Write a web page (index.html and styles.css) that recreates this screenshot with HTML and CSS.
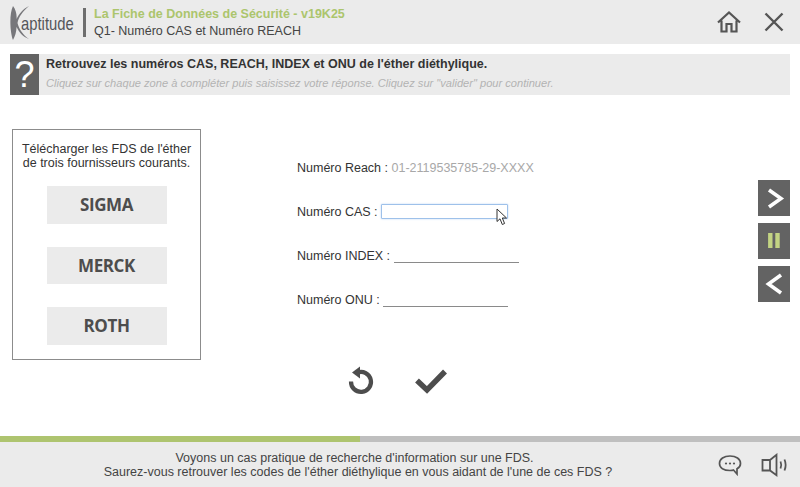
FILE: index.html
```html
<!DOCTYPE html>
<html lang="fr">
<head>
<meta charset="utf-8">
<title>Kaptitude</title>
<link rel="stylesheet" href="styles.css">
</head>
<body>
<div class="app">
  <header class="top">
    <div class="logo">
      <svg class="logo-mark" viewBox="0 0 20 34" width="20" height="34">
        <path d="M3 0 C6 4 7 9 6.500 13 C9 8 13 3 19 0 C13 5 8.500 11 7.500 17 C9 23 13 29 19 33 C13 31 9 26 6.500 21 C6.500 26 5 30 3 34 C0 26 -1 8 3 0Z" fill="#77777b"/>
      </svg>
      <span class="logo-text">aptitude</span>
    </div>
    <div class="titles">
      <div class="title">La Fiche de Données de Sécurité - v19K25</div>
      <div class="subtitle">Q1- Numéro CAS et Numéro REACH</div>
    </div>
    <svg class="top-icon home" viewBox="0 0 24 22" width="24" height="22">
      <path d="M1 11.500 L12 1.500 L23 11.500 M4.500 9.500 V20.500 H9.500 V13 H14.500 V20.500 H19.500 V9.500" fill="none" stroke="#555" stroke-width="2.200"/>
    </svg>
    <svg class="top-icon close" viewBox="0 0 20 20" width="20" height="20">
      <path d="M1.500 1.500 L18.500 18.500 M18.500 1.500 L1.500 18.500" fill="none" stroke="#555" stroke-width="2.400"/>
    </svg>
  </header>

  <section class="question">
    <div class="q-mark">?</div>
    <div class="q-text">
      <div class="q-main">Retrouvez les numéros CAS, REACH, INDEX et ONU de l'éther diéthylique.</div>
      <div class="q-hint">Cliquez sur chaque zone à compléter puis saisissez votre réponse. Cliquez sur "valider" pour continuer.</div>
    </div>
  </section>

  <main class="content">
    <aside class="panel">
      <p class="panel-text">Télécharger les FDS de l'éther<br>de trois fournisseurs courants.</p>
      <div class="supplier">SIGMA</div>
      <div class="supplier">MERCK</div>
      <div class="supplier">ROTH</div>
    </aside>

    <div class="center">
      <div class="fields">
        <div class="field">Numéro Reach : <span class="given">01-2119535785-29-XXXX</span></div>
        <div class="field">Numéro CAS : <span class="input-box"></span></div>
        <div class="field">Numéro INDEX : <span class="blank"></span></div>
        <div class="field">Numéro ONU : <span class="blank"></span></div>
        <svg class="cursor" viewBox="0 0 12 18" width="12" height="18">
          <path d="M1 1 V13.500 L4 10.800 L6.300 16.500 L8.600 15.500 L6.300 10 H10.500 Z" fill="#fff" stroke="#333" stroke-width="1"/>
        </svg>
      </div>
      <div class="actions">
        <svg viewBox="0 0 28 30" width="28" height="30">
          <path d="M10.500 6.500 A10 10 0 1 1 4 15.500" fill="none" stroke="#4d4d4d" stroke-width="4.200"/>
          <path d="M13 0.500 V12.500 L5 6.500 Z" fill="#4d4d4d"/>
        </svg>
        <svg viewBox="0 0 34 26" width="34" height="26">
          <path d="M3 12.500 L13 22 L31 3.500" fill="none" stroke="#4d4d4d" stroke-width="5.500"/>
        </svg>
      </div>
    </div>

    <nav class="side-nav">
      <div class="nav-btn">
        <svg viewBox="0 0 32 36" width="32" height="36"><path d="M11 10 L23 18.500 L11 27" fill="none" stroke="#fff" stroke-width="3.600"/></svg>
      </div>
      <div class="nav-btn">
        <svg viewBox="0 0 32 36" width="32" height="36"><path d="M12.300 10 V25 M19.500 10 V25" fill="none" stroke="#c3d483" stroke-width="4.400"/></svg>
      </div>
      <div class="nav-btn">
        <svg viewBox="0 0 32 36" width="32" height="36"><path d="M23 9 L10.500 18 L23 27" fill="none" stroke="#fff" stroke-width="3.600"/></svg>
      </div>
    </nav>
  </main>

  <div class="progress"><div class="progress-fill"></div></div>

  <footer class="bottom">
    <p class="narration">Voyons un cas pratique de recherche d'information sur une FDS.&nbsp;&nbsp;<br>Saurez-vous retrouver les codes de l'éther diéthylique en vous aidant de l'une de ces FDS ?</p>
    <svg class="bubble" viewBox="0 0 24 22" width="24" height="22">
      <path d="M12 2 C6 2 1.500 5 1.500 9.500 C1.500 14 6 16.500 12 16.500 C13.500 16.500 15 16.300 15.500 16 L19 20 L19 14.800 C21.500 13.500 22.500 11.500 22.500 9.500 C22.500 5 18 2 12 2Z" fill="none" stroke="#555" stroke-width="1.700"/>
      <circle cx="8" cy="9.500" r="1.100" fill="#555"/><circle cx="12" cy="9.500" r="1.100" fill="#555"/><circle cx="16" cy="9.500" r="1.100" fill="#555"/>
    </svg>
    <svg class="speaker" viewBox="0 0 28 24" width="28" height="24">
      <path d="M1.500 7 H9 L15.500 1.800 V22.200 L9 17.500 H1.500 Z M9 7 V17.500" fill="none" stroke="#555" stroke-width="1.800"/>
      <path d="M19.500 8.500 Q21 12 19.500 15.500 M23.500 6.500 Q25.800 12 23.500 17.500" fill="none" stroke="#555" stroke-width="1.800"/>
    </svg>
  </footer>
</div>
</body>
</html>
```
FILE: styles.css
```css
* { box-sizing: border-box; }
html, body { margin: 0; padding: 0; }
body { background: #fff; font-family: "Liberation Sans", Arial, sans-serif; color: #333; }
svg { display: block; flex: none; }
p { margin: 0; }

.app { width: 800px; height: 487px; display: flex; flex-direction: column; overflow: hidden; }

.top { height: 44px; background: #ebebeb; display: flex; align-items: center; padding: 0 16px 0 10px; flex: none; }
.logo { width: 63px; height: 36px; display: flex; align-items: center; flex: none; }
.logo-mark { margin-right: -9px; margin-top: 2px; }
.logo-text { font-size: 19px; color: #55565a; display: block; flex: none; transform: scaleX(0.78); transform-origin: left center; margin-top: 3px; white-space: nowrap; }
.titles { margin-left: 10px; padding-left: 8px; border-left: 3px solid #6e6e6e; height: 29px; display: flex; flex-direction: column; justify-content: center; line-height: 16px; margin-top: 1px; flex: 1; }
.title { font-size: 12.5px; font-weight: bold; color: #acc56d; }
.subtitle { font-size: 12.5px; color: #444; margin-top: 1px; }
.top-icon.home { margin-right: 23px; }

.question { margin: 10px 10px 0; height: 41px; background: #ebebeb; display: flex; flex: none; }
.q-mark { width: 29px; background: #636363; color: #fff; font-size: 36px; display: flex; align-items: center; justify-content: center; }
.q-text { padding: 2px 0 0 7px; }
.q-main { font-size: 12.5px; font-weight: bold; color: #333; line-height: 16px; }
.q-hint { font-size: 11.1px; font-style: italic; color: #b3b3b3; line-height: 16px; margin-top: 3px; }

.content { flex: 1; position: relative; display: flex; align-items: flex-start; padding-left: 12px; }

.panel { width: 189px; height: 231px; margin-top: 34px; border: 1px solid #8c8c8c; padding: 12px 0 0; display: flex; flex-direction: column; align-items: center; flex: none; }
.panel-text { font-size: 12.5px; line-height: 14px; color: #333; text-align: center; margin-bottom: 16px; flex: none; }
.supplier { width: 120px; height: 37.5px; flex: none; background: #ebebeb; color: #4d4d4d; font-family: "Open Sans", sans-serif; font-weight: 700; font-size: 17px; display: flex; align-items: center; justify-content: center; margin-bottom: 23px; letter-spacing: -0.4px; }

.center { margin-left: 96px; width: 260px; }
.fields { position: relative; margin-top: 66px; }
.field { height: 44px; font-size: 12.5px; line-height: 14px; color: #333; display: flex; align-items: flex-start; white-space: pre; }
.given { color: #a8a8a8; }
.input-box { display: block; width: 127px; height: 15px; margin-top: -1px; border: 1px solid #9ec1ea; border-radius: 1px; box-shadow: 0 0 2px #b5d1f2; background: #fff; }
.blank { display: block; width: 125px; height: 14px; border-bottom: 1px solid #8a8a8a; }
.cursor { position: absolute; left: 199px; top: 47px; }

.actions { display: flex; gap: 39px; align-items: center; margin-top: 29px; margin-left: 50px; }

.side-nav { position: absolute; left: 758px; top: 85px; display: flex; flex-direction: column; gap: 7px; }
.nav-btn { width: 32px; height: 36px; background: #636363; }

.progress { height: 6px; background: #bfbfbf; flex: none; }
.progress-fill { width: 360px; height: 100%; background: #aec46f; }

.bottom { height: 45px; background: #ebebeb; display: flex; align-items: center; flex: none; padding-right: 11px; }
.narration { width: 714px; font-size: 12.5px; line-height: 14px; color: #444; text-align: center; padding-left: 3px; padding-top: 1px; }
.bubble { margin-left: 5px; margin-right: 19px; }
```
